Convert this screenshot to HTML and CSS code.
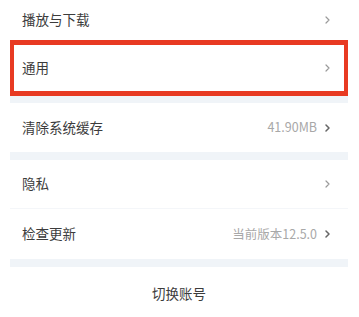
FILE: index.html
```html
<!DOCTYPE html>
<html lang="zh-CN">
<head>
<meta charset="utf-8">
<link rel="stylesheet" href="styles.css">
</head>
<body>
<div class="list">
  <div class="row row-first">
    <span class="label">播放与下载</span>
    <span class="right"><svg class="chev" viewBox="0 0 5 8" width="5" height="8"><polyline points="1,1 4,4 1,7" /></svg></span>
  </div>
  <div class="row row-hl">
    <span class="label">通用</span>
    <span class="right"><svg class="chev" viewBox="0 0 5 8" width="5" height="8"><polyline points="1,1 4,4 1,7" /></svg></span>
  </div>
  <div class="gap gap-7"></div>
  <div class="row row-49">
    <span class="label">清除系统缓存</span>
    <span class="right"><span class="value">41.90MB</span><svg class="chev dark" viewBox="0 0 5 8" width="5" height="8"><polyline points="1,1 4,4 1,7" /></svg></span>
  </div>
  <div class="gap"></div>
  <div class="row row-48">
    <span class="label">隐私</span>
    <span class="right"><svg class="chev" viewBox="0 0 5 8" width="5" height="8"><polyline points="1,1 4,4 1,7" /></svg></span>
  </div>
  <div class="line"></div>
  <div class="row row-50">
    <span class="label">检查更新</span>
    <span class="right"><span class="value">当前版本12.5.0</span><svg class="chev dark" viewBox="0 0 5 8" width="5" height="8"><polyline points="1,1 4,4 1,7" /></svg></span>
  </div>
  <div class="gap"></div>
  <div class="switch">切换账号</div>
</div>
</body>
</html>
```
FILE: styles.css
```css
html, body {
  margin: 0;
  padding: 0;
  background: #ffffff;
}
body {
  font-family: "Noto Sans CJK SC", "Noto Sans", sans-serif;
  color: #3c3c3c;
  width: 359px;
  height: 317px;
  overflow: hidden;
}
.list {
  margin: 0 11px 0 10px;
  display: flex;
  flex-direction: column;
}
.row {
  display: flex;
  align-items: center;
  justify-content: space-between;
  padding: 0 18px 0 12px;
  box-sizing: border-box;
}
.row-first {
  height: 40px;
}
.row-hl {
  height: 56px;
  border-style: solid;
  border-color: #e83a22;
  border-width: 5px 4px;
  padding: 0 14px 0 8px;
}
.row-49 { height: 49px; }
.row-48 { height: 48px; }
.row-50 { height: 50px; }
.label {
  font-size: 13.5px;
  line-height: 1;
  color: #3c3c3c;
}
.right {
  display: flex;
  align-items: center;
  gap: 8px;
}
.value {
  font-size: 12.5px;
  line-height: 1;
  color: #a8a8a8;
}
.chev {
  display: block;
}
.chev polyline {
  fill: none;
  stroke: #9a9a9a;
  stroke-width: 1.2;
  stroke-linecap: round;
  stroke-linejoin: round;
}
.chev.dark polyline {
  stroke: #666666;
  stroke-width: 1.5;
}
.gap {
  height: 8px;
  background: #f0f4f8;
}
.gap-7 {
  height: 7px;
}
.line {
  height: 1px;
  background: #f4f6f9;
}
.switch {
  height: 52px;
  display: flex;
  align-items: center;
  justify-content: center;
  font-size: 13.5px;
  color: #3c3c3c;
}
```
